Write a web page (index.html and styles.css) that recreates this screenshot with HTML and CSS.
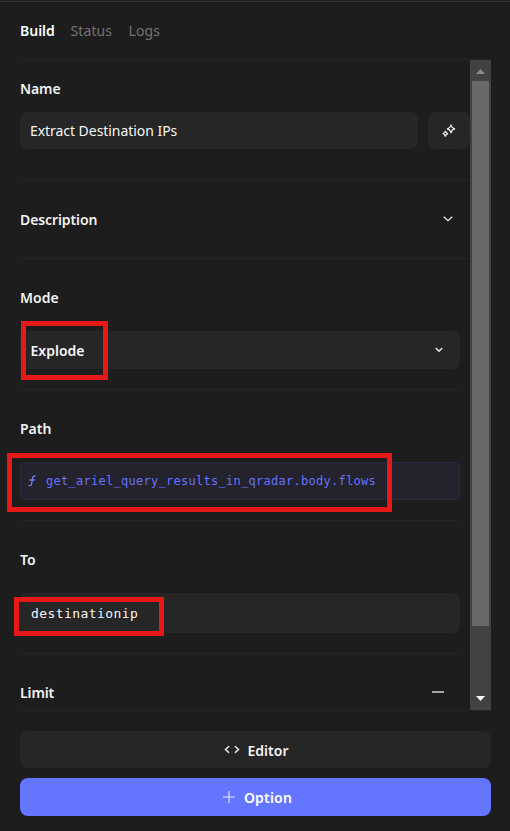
FILE: index.html
```html
<!DOCTYPE html>
<html lang="en">
<head>
<meta charset="utf-8">
<title>Build</title>
<link rel="stylesheet" href="styles.css">
</head>
<body>
<main class="panel">
  <nav class="tabs">
    <a class="tab active t-build">Build</a>
    <a class="tab t-status">Status</a>
    <a class="tab t-logs">Logs</a>
  </nav>
  <div class="scroller">
    <div class="content">
      <section class="section name">
        <h2 class="t-name">Name</h2>
        <div class="row">
          <div class="field"><span class="value t-extract">Extract Destination IPs</span></div>
          <button class="magic" aria-label="Suggest name">
            <svg width="16" height="16" viewBox="0 0 16 16" fill="none" stroke="#eee" stroke-width="1.2"><path d="M10 1.5Q10.5 5.2 14 5.8Q10.5 6.4 10 10.2Q9.500 6.400 6 5.800Q9.500 5.200 10 1.500ZM4.400 7.800Q4.700 10.300 7 10.700Q4.700 11.100 4.400 13.600Q4.100 11.100 1.800 10.700Q4.100 10.300 4.400 7.800Z"/></svg>
          </button>
        </div>
      </section>
      <section class="section description">
        <h2 class="t-description">Description</h2>
        <svg width="10" height="6" viewBox="0 0 10 6" fill="none" stroke="#e8e8e8" stroke-width="1.3"><path d="M.7.7 5 4.700 9.300.7"/></svg>
      </section>
      <section class="section inset mode">
        <h2 class="t-mode">Mode</h2>
        <div class="field select">
          <span class="value strong t-explode">Explode</span>
          <svg width="8" height="6" viewBox="0 0 8 6" fill="none" stroke="#eee" stroke-width="1.4"><path d="M.8 1 4 4.200 7.200 1"/></svg>
        </div>
      </section>
      <section class="section inset path">
        <h2 class="t-path">Path</h2>
        <div class="field formula">
          <svg class="fn" width="8" height="12" viewBox="0 0 8 12" fill="none" stroke="#7078e8" stroke-width="1.4"><path d="M7.500 1.300Q5.200.4 4.700 2.800L3.600 9Q3.200 11.200.6 10.400M1.300 5H6.800"/></svg>
          <code class="t-code">get_ariel_query_results_in_qradar.body.flows</code>
        </div>
      </section>
      <section class="section inset to">
        <h2 class="t-to">To</h2>
        <div class="field"><code class="value t-dest">destinationip</code></div>
      </section>
      <section class="limit">
        <h2 class="t-limit">Limit</h2>
        <i class="minus"></i>
      </section>
    </div>
    <div class="scrollbar">
      <svg width="9" height="5" viewBox="0 0 9 5"><path fill="#8b8b8b" d="M0 5 4.500 0 9 5Z"/></svg>
      <div class="thumb"></div>
      <svg width="9" height="5" viewBox="0 0 9 5"><path fill="#fff" d="M0 0H9L4.500 5Z"/></svg>
    </div>
  </div>
  <footer class="actions">
    <button class="action editor">
      <svg width="16" height="9" viewBox="0 0 16 9" fill="none" stroke="#eee" stroke-width="1.5"><path d="M5 1.200 1.500 4.500 5 7.800M11 1.200 14.500 4.500 11 7.800"/></svg>
      <span class="t-editor">Editor</span>
    </button>
    <button class="action option">
      <svg width="12" height="12" viewBox="0 0 12 12" fill="none" stroke="#dfe2ff" stroke-width="1.2"><path d="M6 0V12M0 6H12"/></svg>
      <span class="t-option">Option</span>
    </button>
  </footer>
  <div class="mark mark-mode"></div>
  <div class="mark mark-path"></div>
  <div class="mark mark-to"></div>
</main>
</body>
</html>
```

FILE: styles.css
```css
* { box-sizing: border-box; }
body { margin: 0; background: #1d1d1d; }
.panel {
  position: relative;
  width: 510px;
  height: 831px;
  overflow: hidden;
  padding: 0 19px 0 20px;
  color: #f2f2f2;
  font: 600 14px/20px "Noto Sans", "Open Sans", sans-serif;
  background: linear-gradient(#1d1d1d 1px, #363636 1px, #363636 2px, #1d1d1d 2px);
}
h2 { margin: 0; font: inherit; white-space: nowrap; }
svg { display: block; flex: none; }
.tabs {
  display: flex;
  height: 60px;
  padding-top: 21px;
  border-bottom: 1px solid #252525;
}
.tab { color: #737373; font-weight: 400; white-space: nowrap; }
.tab.active { color: #fff; font-weight: 600; }
.t-build { width: 50.500px; }
.t-status { width: 58px; }
.scroller {
  display: flex;
  height: 651px;
  border-bottom: 1px solid #252525;
}
.content { width: 450px; overflow: hidden; }
.section { border-bottom: 1px solid #252525; }
.inset { margin-right: 10px; }
.name { height: 120px; padding-top: 19px; }
.row { display: flex; gap: 10px; margin-top: 13px; }
.field {
  display: flex;
  align-items: center;
  flex: 1;
  height: 37px;
  padding: 0 10px;
  border-radius: 7px;
  background: #262626;
}
.value { color: #f6f6f6; font-weight: 400; white-space: nowrap; }
.value.strong { padding-top: 2px; font-weight: 600; }
.magic {
  display: flex;
  align-items: center;
  justify-content: center;
  width: 42px;
  height: 37px;
  padding: 0;
  border: 0;
  border-radius: 7px;
  background: #262626;
}
.description {
  display: flex;
  align-items: center;
  justify-content: space-between;
  height: 79px;
  padding-right: 17px;
}
.description h2 { padding-top: 2px; }
.mode, .path { height: 131px; padding-top: 29px; }
.select { height: 38px; margin-top: 23px; justify-content: space-between; padding-right: 17px; padding-left: 10.500px; }
.formula {
  height: 38px;
  margin-top: 23px;
  padding-left: 7px;
  border: 1px solid #29293e;
  border-radius: 5px;
  background: #23222d;
}
.fn { margin-right: 10px; }
code { font-family: "DejaVu Sans Mono", monospace; white-space: nowrap; }
.formula code { color: #6673ff; font-size: 12px; font-weight: 400; }
.to { height: 133px; padding-top: 29px; }
.to .field { height: 40px; margin-top: 23px; padding-left: 11px; }
.to code { padding-top: 2px; font-size: 13px; }
.limit {
  display: flex;
  justify-content: space-between;
  align-items: center;
  height: 20px;
  margin-top: 28px;
  padding-right: 26px;
}
.limit h2 { padding-top: 2px; }
.minus { width: 12px; height: 2px; background: #a5a5a5; }
.scrollbar {
  display: flex;
  flex-direction: column;
  align-items: center;
  width: 21px;
  height: 650px;
  padding: 9px 0;
  background: #424242;
}
.thumb { width: 17px; height: 545px; margin: 7px 0 auto; background: #686868; }
.actions { display: flex; flex-direction: column; gap: 10px; margin-top: 20px; }
.action {
  display: flex;
  align-items: center;
  justify-content: center;
  height: 37px;
  padding: 0;
  border: 0;
  border-radius: 8px;
  color: #f4f4f4;
  background: #262626;
  font: inherit;
}
.action span { padding-top: 2px; }
.editor { gap: 8px; padding-left: 1px; }
.option { gap: 9px; height: 38px; padding-left: 4px; color: #fff; background: #6476ff; }
.mark { position: absolute; border: 5px solid #e61919; }
.mark-mode { left: 21px; top: 321px; width: 87px; height: 59px; }
.mark-path { left: 7px; top: 453px; width: 385px; height: 59px; }
.mark-to { left: 14px; top: 597px; width: 150px; height: 39px; }
.t-status, .t-logs { letter-spacing: .1px; }
.t-name, .t-description, .t-limit { letter-spacing: -.1px; }
.t-extract { letter-spacing: -.05px; }
.t-option { letter-spacing: .2px; }
.t-code { letter-spacing: .276px; }
.t-dest { letter-spacing: .424px; }
```
